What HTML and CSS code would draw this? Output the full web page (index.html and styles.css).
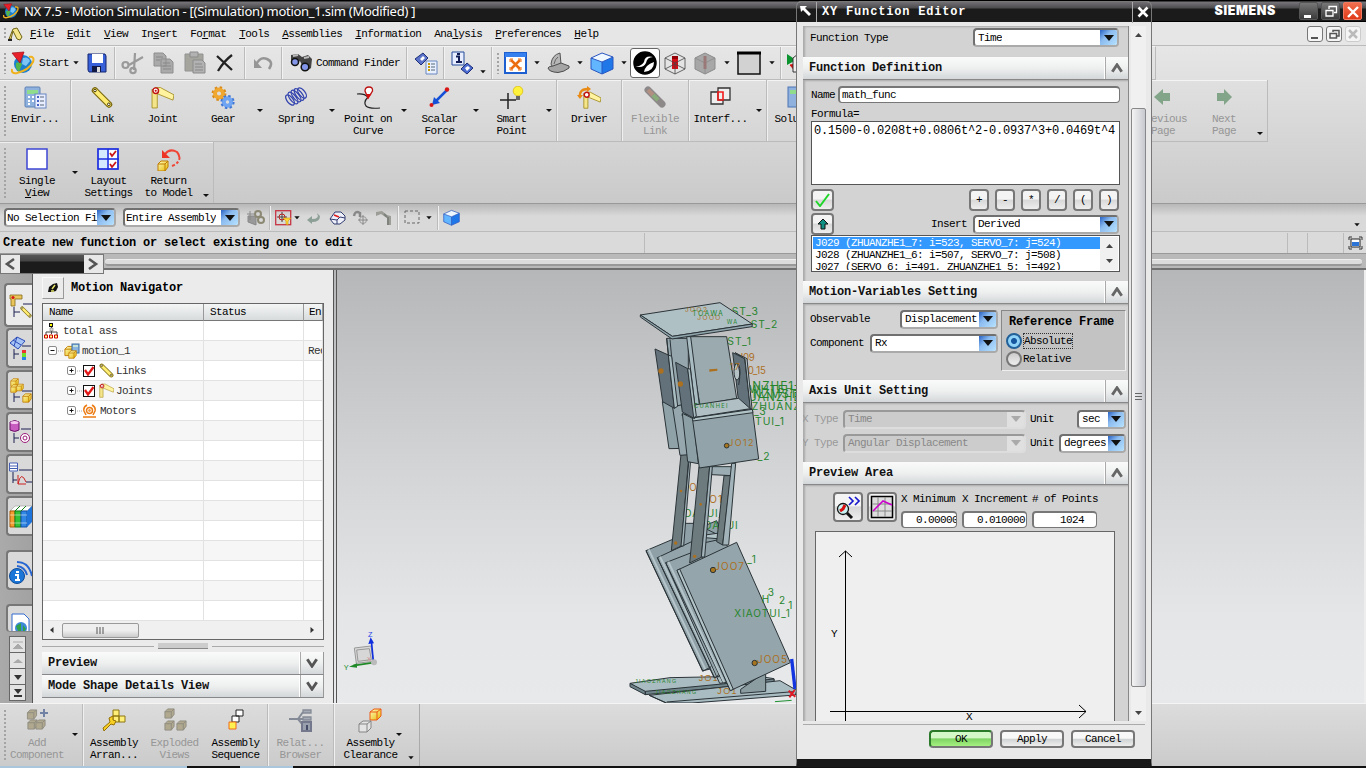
FILE: index.html
```html
<!DOCTYPE html>
<html lang="en">
<head>
<meta charset="utf-8">
<title>NX 7.5 - Motion Simulation</title>
<link rel="stylesheet" href="styles.css">
</head>
<body>
<svg class="defs" width="0" height="0">
  <defs>
    <linearGradient id="gy" x1="0" y1="0" x2="1" y2="1"><stop offset="0" stop-color="#fffbc0"/><stop offset="1" stop-color="#e6b800"/></linearGradient>
    <symbol id="i-nx" viewBox="0 0 24 24"><circle cx="12" cy="13" r="9" fill="#1b7fd0"/><path d="M5 12q4-2 6 1l-3 8q-4-3-3-9z" fill="#54b54b"/><path d="M12 7q5-2 7 3l-4 5-4-2z" fill="#7cc4f5"/><path d="M1 18q-1 5 5 4Q18 19 22 11q2-6-4-5" fill="none" stroke="#f0b21c" stroke-width="2"/><path d="M1 2l12-1-4 11z" fill="#e8202a" stroke="#a00a14" stroke-width=".7"/></symbol>
    <symbol id="i-bar" viewBox="0 0 22 22"><path d="M4 4L18 18" stroke="#77650a" stroke-width="6.400" stroke-linecap="round"/><path d="M4 4L18 18" stroke="#ffec72" stroke-width="4.200" stroke-linecap="round"/><circle cx="4" cy="4" r="1.300" fill="#fff" stroke="#443800"/><circle cx="17.800" cy="17.800" r="1.300" fill="#fff" stroke="#443800"/></symbol>
    <symbol id="i-joint" viewBox="0 0 22 22"><path d="M1 3v18h5V8z" fill="#f5e58a" stroke="#a08b1e" stroke-width=".8"/><path d="M4 1.500h5l13 7-1 5L5 7z" fill="#fff3a0" stroke="#a08b1e" stroke-width=".8"/><circle cx="4.500" cy="4.500" r="2.700" fill="#fff" stroke="#c01010" stroke-width="1.400"/><circle cx="4.500" cy="4.500" r="1" fill="#c01010"/></symbol>
    <symbol id="i-cube" viewBox="0 0 24 24"><path d="M1 7l11 4v12L1 18z" fill="#62b5ff"/><path d="M12 11l11-5v12l-11 5z" fill="#1f77e8"/><path d="M1 7l11-5 11 4-11 5z" fill="#eff8ff"/><path d="M1 7l11 4 11-5M12 11v12M1 7v11l11 5 11-5V6L12 2z" fill="none" stroke="#2956c0"/></symbol>
    <symbol id="i-ycube" viewBox="0 0 12 12"><path d="M1 4l3-3h7v6l-3 4H1z" fill="url(#gy)" stroke="#c07c00"/><path d="M1 4h7v7M8 4l3-3" fill="none" stroke="#c07c00"/></symbol>
    <symbol id="i-gcube" viewBox="0 0 12 12"><path d="M1 4l3-3h7v6l-3 4H1z" fill="#b0a88f" stroke="#8f8c80"/><path d="M1 4h7v7M8 4l3-3" fill="none" stroke="#8f8c80"/></symbol>
    <symbol id="i-dd" viewBox="0 0 6 4"><path d="M.3 .3h5.400L3 3.200z" fill="#111"/></symbol>
    <symbol id="i-up" viewBox="0 0 12 10"><path d="M1.300 8.800L6 1.800l4.700 7" fill="none" stroke="#666" stroke-width="2.900"/></symbol>
    <symbol id="i-down" viewBox="0 0 12 10"><path d="M1.300 1.200L6 8.200l4.700-7" fill="none" stroke="#555" stroke-width="2.900"/></symbol>
    <symbol id="i-chk" viewBox="0 0 12 12"><rect x=".5" y=".5" width="11" height="11" fill="#fff" stroke="#111"/><path d="M2 5l3 4.500L10.500 2" fill="none" stroke="#e01818" stroke-width="2.300"/></symbol>
    <symbol id="i-plus" viewBox="0 0 10 10"><rect x=".5" y=".5" width="8" height="8" rx="1.500" fill="#fff" stroke="#8b8b8b"/><path d="M2.500 4.500h4M4.500 2.500v4" stroke="#111"/></symbol>
    <symbol id="i-minus" viewBox="0 0 10 10"><rect x=".5" y=".5" width="8" height="8" rx="1.500" fill="#fff" stroke="#8b8b8b"/><path d="M2.500 4.500h4" stroke="#111"/></symbol>
  </defs>
</svg>

<div class="app">
  <header class="titlebar">
    <svg width="16" height="16"><use href="#i-nx"/></svg>
    <span class="app-title">NX 7.5 - Motion Simulation - [(Simulation) motion_1.sim (Modified) ]</span>
    <span class="brand">SIEMENS</span>
    <div class="winbtns">
      <span class="wb"><svg width="18" height="17"><path d="M4 13.500h7" stroke="#fff" stroke-width="3"/></svg></span>
      <span class="wb"><svg width="18" height="17" fill="none" stroke="#fff" stroke-width="1.300"><path d="M7 6V3.500h7.500v6H12"/><path d="M4 7.500h7v5.500H4z"/></svg></span>
      <span class="wb red"><svg width="18" height="17"><path d="M4 4l10 10M14 4L4 14" stroke="#fff" stroke-width="2.400"/></svg></span>
    </div>
  </header>

  <nav class="menubar grip">
    <svg width="17" height="16"><path d="M2 13L6 3l4-1 5 9-2 3-3-1-4-8-2 8z" fill="#f5e58a" stroke="#6e6212"/><path d="M1 14h4" stroke="#222" stroke-width="2"/></svg>
    <span class="m"><u>F</u>ile</span><span class="m"><u>E</u>dit</span><span class="m"><u>V</u>iew</span><span class="m">In<u>s</u>ert</span><span class="m">Fo<u>r</u>mat</span><span class="m"><u>T</u>ools</span><span class="m"><u>A</u>ssemblies</span><span class="m"><u>I</u>nformation</span><span class="m">Ana<u>l</u>ysis</span><span class="m"><u>P</u>references</span><span class="m"><u>H</u>elp</span>
    <div class="mdibtns">
      <span><svg width="15" height="15"><path d="M3 11h7" stroke="#555" stroke-width="2"/></svg></span>
      <span><svg width="15" height="15" fill="none" stroke="#555" stroke-width="1.500"><path d="M6 5V3.500h6V9h-2M3 6.500h6.500V11H3z"/></svg></span>
      <span class="off"><svg width="15" height="15"><path d="M3 3l8 8M11 3l-8 8" stroke="#bbb" stroke-width="2.500"/></svg></span>
    </div>
  </nav>

  <div class="bars">
    <div class="bar1 grip">
      <div class="cell w103"><svg class="i" width="24" height="24"><use href="#i-nx"/></svg><span class="start">Start</span><svg class="dd" width="6" height="4"><use href="#i-dd"/></svg>
        <svg class="save" width="20" height="20"><path d="M1 1h17l1 2v16H2l-1-2z" fill="#3860d8" stroke="#15266e"/><path d="M5 1h11v9H5z" fill="#fff"/><path d="M5 13h9v6H5z" fill="#101844"/><path d="M10 14h3v5h-3z" fill="#ddd"/></svg></div>
      <div class="cell w130 sp">
        <svg width="24" height="24" fill="none" stroke="#9a9a9a" stroke-width="2.200"><path d="M22 6L8 14M14 2l-1 17"/><circle cx="4.500" cy="14" r="3"/><circle cx="12" cy="19.500" r="2.700"/></svg>
        <svg width="22" height="22"><path d="M1 1h9l3 3v10H1zM8 7h9l3 3v11H8z" fill="#aaa" stroke="#8e8e8e"/><path d="M3 5h7M3 8h4M10 11h7M10 14h8M10 17h8" stroke="#888"/></svg>
        <svg width="24" height="24"><path d="M2 3h18v17H2z" fill="#a5a59d" stroke="#929292"/><path d="M7 1h8v5H7zM10 9h9l3 3v10H10z" fill="#b2b2b2" stroke="#8b8b8b"/><path d="M12 13h7M12 16h8M12 19h8" stroke="#888"/></svg>
        <svg width="20" height="20"><path d="M2 3l15 14M17 2Q9 8 3 18" fill="none" stroke="#222" stroke-width="2.300"/></svg>
      </div>
      <div class="cell w37"><svg width="22" height="18" fill="none" stroke="#969696" stroke-width="2.500"><path d="M4 11q4-9 11-6t2 10"/><path d="M2 5v9h8z" fill="#969696" stroke="none"/></svg></div>
      <div class="cell w125"><svg width="24" height="20"><path d="M2 2l7-1 4 3 6-2 4 4-1 9-4 3-5-6-2-4-5 4-4-3z" fill="#444"/><path d="M4 3l5-1M15 5l5-1" stroke="#bbb" stroke-width="2"/><circle cx="6" cy="9" r="3.500" fill="#8295e8" stroke="#111" stroke-width="1.500"/><circle cx="16" cy="14" r="3.800" fill="#8295e8" stroke="#111" stroke-width="1.500"/></svg><span class="finder">Command Finder</span></div>
      <div class="cell w37"><svg width="24" height="23"><path d="M1 7l8-6 5 5-7 7z" fill="#5a73c8" stroke="#1e2f78"/><path d="M6 7l3-3 2 2-3 3z" fill="#fff"/><path d="M12 9h11v13H12z" fill="#e8f0ff" stroke="#6887bf"/><path d="M14 12h2M14 15h2M14 18h2" stroke="#c79b00" stroke-width="2"/><path d="M17 12h4M17 15h4M17 18h4" stroke="#567"/></svg></div>
      <div class="cell w48"><svg width="24" height="24"><path d="M1 1h12v13H1z" fill="#e7edff" stroke="#234a99"/><path d="M5 5.500h3v5M5 11h6M6 3h3" stroke="#111c55" stroke-width="2" fill="none"/><path d="M10 18l6-6 6 5-6 6z" fill="#4c6bd0" stroke="#1e2f78"/><path d="M14 17l3-2 2 2-3 3z" fill="#fff"/></svg><svg class="dd low" width="6" height="4"><use href="#i-dd"/></svg></div>
      <div class="cell w289 grip2">
        <svg width="23" height="22"><path d="M1 1h21v20H1z" fill="#fff" stroke="#1d5fd0" stroke-width="2"/><path d="M1 1h21v4H1z" fill="#3681ef"/><path d="M7 8l9 9M16 8l-9 9" stroke="#ec6d10" stroke-width="2.500"/><path d="M6 7h3M6 7v3M17 7h-3M17 7v3M6 18h3M6 18v-3M17 18h-3M17 18v-3" stroke="#ec6d10"/></svg>
        <svg class="dd" width="6" height="4"><use href="#i-dd"/></svg>
        <svg width="23" height="22"><path d="M4 12Q5 3 13 1l1 11-8 4z" fill="#b6b6b6" stroke="#555"/><path d="M7 12q1-5 4-7" stroke="#666" fill="none"/><path d="M1 16q1-2 5-2l8-3 8 3v2q-5 4-11 4.500Q2 20 1 16z" fill="#a5a5a5" stroke="#4d4d4d"/></svg>
        <svg class="dd" width="6" height="4"><use href="#i-dd"/></svg>
        <svg width="24" height="24"><use href="#i-cube"/></svg>
        <svg class="dd" width="6" height="4"><use href="#i-dd"/></svg>
        <span class="pressed"><svg width="24" height="24"><circle cx="12" cy="12" r="11" fill="#000"/><path d="M2 15q6 1 9-4 1-7 9-5-6 0-7 6-3 6-11 3z" fill="#fff"/><path d="M11 21q1-7 10-10 0 9-10 10z" fill="#fff"/><circle cx="12" cy="12" r="11" fill="none" stroke="#000" stroke-width="1.500"/></svg></span>
        <svg width="23" height="23"><path d="M1 6l10-5 10 5v11l-10 5-10-5z" fill="#e4e4e4"/><path d="M8 5h6v12H8z" fill="#d20d15"/><path d="M8 4h6v3H8z" fill="#940006"/><path d="M1 6l10-5 10 5v11l-10 5-10-5zM1 6l10 5 10-5M11 11v11M1 17l10-5 10 5" fill="none" stroke="#444" stroke-width=".8"/></svg>
        <svg class="g2" width="23" height="23"><path d="M1 6l10-5 10 5v11l-10 5-10-5z" fill="#a7a7a7" stroke="#8b8b8b"/><path d="M1 6l10 5 10-5M11 11v11" fill="none" stroke="#909090"/><path d="M11 4v13" stroke="#9a7878" stroke-width="3"/></svg>
        <svg class="dd" width="6" height="4"><use href="#i-dd"/></svg>
        <svg width="25" height="25"><rect x="1" y="2" width="22" height="21" fill="#d2d2d2" stroke="#111" stroke-width="1.500"/><path d="M0 2h24" stroke="#000" stroke-width="3"/></svg>
        <svg class="dd" width="6" height="4"><use href="#i-dd"/></svg>
      </div>
      <div class="cell last1"><svg width="18" height="22"><path d="M1 2l9 6-9 5z" fill="#0a932e"/><path d="M10 12l-6 1 6 7z" fill="#d41212" stroke="#d41212"/><path d="M7 6l5-4h6v18H7z" fill="#eee" stroke="#333"/></svg></div>
    </div>

    <div class="bar2 grip">
      <div class="tool w71 s"><svg width="23" height="23"><rect x="1" y="1" width="15" height="20" rx="1" fill="#8fb1dd" stroke="#5f83b5"/><path d="M3 4h11v4H3z" fill="#8fdc8c"/><path d="M4 11h2M8 11h2M4 15h2M8 15h2M4 18h2" stroke="#fff" stroke-width="2"/><rect x="11" y="8" width="11" height="14" fill="#e8eeff" stroke="#6887bf"/><path d="M13 11h2M13 15h2M13 19h2" stroke="#4864c4" stroke-width="2"/><path d="M16 11h4M16 15h4M16 19h4" stroke="#567"/></svg><b>Envir...</b></div>
      <div class="tool w62"><svg width="22" height="22"><use href="#i-bar"/></svg><b>Link</b></div>
      <div class="tool w59"><svg width="23" height="22"><use href="#i-joint"/></svg><b>Joint</b></div>
      <div class="tool w62"><svg width="24" height="24" fill="none"><circle cx="8" cy="7.500" r="4" stroke="#f0a830" stroke-width="4"/><circle cx="8" cy="7.500" r="6.500" stroke="#d98a18" stroke-width="1.800" stroke-dasharray="2.500 2.600"/><circle cx="16.500" cy="16" r="3.700" stroke="#6fa4f2" stroke-width="4"/><circle cx="16.500" cy="16" r="6.200" stroke="#3f77d6" stroke-width="1.800" stroke-dasharray="2.500 2.370"/></svg><b>Gear</b></div><i class="w12 arr"></i>
      <div class="tool w60"><svg width="24" height="22" fill="none" stroke="#3142ae" stroke-width="1.300"><ellipse cx="6" cy="14" rx="3" ry="6" transform="rotate(-38 6 14)"/><ellipse cx="9" cy="12" rx="3" ry="7" transform="rotate(-38 9 12)"/><ellipse cx="12" cy="10" rx="3" ry="7" transform="rotate(-38 12 10)"/><ellipse cx="15" cy="8.500" rx="3" ry="7" transform="rotate(-38 15 8.500)"/><ellipse cx="18" cy="7" rx="3" ry="6" transform="rotate(-38 18 7)"/></svg><b>Spring</b></div><i class="w12 arr"></i>
      <div class="tool w60"><svg width="24" height="23" fill="none"><path d="M1 8q7-1 11 3-5 5-2 9 3 3 14 2" stroke="#222" stroke-width="1.200"/><path d="M12 12L9 5q0-4 4-4t3.500 4z" fill="#fff" stroke="#bb1010" stroke-width="1.300"/><path d="M10 8h5.500L12 13z" fill="#d41010"/></svg><b>Point on<br>Curve</b></div><i class="w12 arr"></i>
      <div class="tool w59"><svg width="22" height="22"><path d="M18 4L6 16" stroke="#1652d8" stroke-width="2.500"/><path d="M3 19l2-8 6 6z" fill="#1652d8"/><circle cx="18" cy="3.500" r="2.200" fill="#d81616"/><circle cx="2.500" cy="19" r="2" fill="#d81616"/></svg><b>Scalar<br>Force</b></div><i class="w13 arr"></i>
      <div class="tool w59"><svg width="24" height="24"><path d="M0 14h16M8 7v16" stroke="#222" stroke-width="1.500"/><circle cx="18" cy="5" r="4.800" fill="#fff23c" stroke="#d8b800" stroke-width=".7"/><path d="M16 10h4v4h-4z" fill="#666"/></svg><b>Smart<br>Point</b></div><i class="w16 arr s"></i>
      <div class="tool w65 s"><svg width="24" height="24"><g transform="translate(6 5) scale(.82)"><path d="M1 3v18h5V8z" fill="#f5e58a" stroke="#a08b1e"/><path d="M4 1.500h5l13 7-1 5L5 7z" fill="#fff3a0" stroke="#a08b1e"/><circle cx="4.500" cy="4.500" r="3" fill="#fff" stroke="#c01010" stroke-width="1.800"/></g><path d="M3 11Q2 3 11 3" fill="none" stroke="#e98a14" stroke-width="2.400"/><path d="M10 0l4 3-4 3zM0 9h6l-3 4z" fill="#e98a14"/></svg><b>Driver</b></div>
      <div class="tool w67 s off"><svg width="24" height="22"><path d="M5 4l14 14" stroke="#8d8989" stroke-width="7" stroke-linecap="round"/><path d="M5 4l5 5" stroke="#b38f82" stroke-width="4"/><path d="M10 9l5 5" stroke="#88ad78" stroke-width="4"/></svg><b>Flexible<br>Link</b></div>
      <div class="tool w63"><svg width="22" height="22" fill="none" stroke="#333" stroke-width="1.300"><path d="M1 6h12v12H1z" fill="#eee"/><path d="M8 2h12v12H8z" fill="#eee"/><path d="M8 6h5v8H8z" stroke="#f21c1c" stroke-width="1.600"/></svg><b>Interf...</b></div><i class="w15 arr s"></i>
      <div class="tool w51"><svg width="20" height="22"><rect x="5" y="1" width="14" height="20" fill="#8fb1dd" stroke="#4c75b5"/><path d="M7 4h10v4H7z" fill="#8fdc8c"/></svg><b>Solut.</b></div>
      <div class="tool prev off"><svg width="18" height="20"><path d="M0 11l9-8v4h7v8H9v4z" fill="#82a488"/></svg><b>Previous<br>Page</b></div>
      <div class="tool w56 off"><svg width="18" height="20"><path d="M17 11L9 3v4H2v8h7v4z" fill="#82a488"/></svg><b>Next<br>Page</b></div><i class="w16 arr end"></i>
    </div>

    <div class="bar3 grip">
      <div class="tool w65a"><svg width="23" height="23"><rect x="1" y="1" width="20" height="20" fill="#fff" stroke="#3c46d4" stroke-width="1.500"/></svg><b>Single<br><u>V</u>iew</b></div><i class="w11 arr"></i>
      <div class="tool w57"><svg width="23" height="23"><rect x="1" y="1" width="20" height="20" fill="#d6eaff" stroke="#1c2ce0" stroke-width="1.700"/><path d="M12 2h8v8h-8zM12 12h8v8h-8z" fill="#fff"/><path d="M11 1v21M1 11h21" stroke="#1c2ce0" stroke-width="1.500"/><path d="M13 5l2 3 4-5M13 16l2 3 4-5" fill="none" stroke="#cc1717" stroke-width="1.800"/></svg><b>Layout<br>Settings</b></div>
      <div class="tool w63"><svg width="24" height="24"><path d="M8 6q5-6 12-2 5 6 0 11-2 2-5 3" fill="none" stroke="#f04434" stroke-width="2" stroke-dasharray="22 2 2.500 2"/><path d="M5 2v8h8z" fill="#ed3324"/><svg x="0" y="12" width="12" height="12"><use href="#i-ycube"/></svg></svg><b>Return<br>to Model</b></div><i class="w11 arr end"></i>
    </div>
  </div>

  <div class="selbar">
    <span class="combo sel1"><span>No Selection Fi</span><em></em></span>
    <span class="combo sel2"><span>Entire Assembly</span><em></em></span>
    <svg class="k1" width="18" height="16"><path d="M1 6h8v9l-8-3zM3 1v9M0 4h8" fill="#999" stroke="#888"/><circle cx="11" cy="4" r="3" fill="none" stroke="#8b8873" stroke-width="2"/><circle cx="14" cy="10" r="3" fill="none" stroke="#8b8873" stroke-width="2"/></svg>
    <i class="vs"></i>
    <svg width="17" height="16"><rect x=".7" y=".7" width="15" height="14" fill="none" stroke="#c63443" stroke-width="1.300"/><path d="M2 7h10M7 2v10" stroke="#444"/><circle cx="7" cy="7" r="3" fill="none" stroke="#bb2222"/><path d="M8 8h8l-3 3v4l-2-1v-3z" fill="#ffd53b" stroke="#c99c00" stroke-width=".6"/></svg>
    <svg class="dd a" width="6" height="4"><use href="#i-dd"/></svg>
    <svg class="k2" width="14" height="12"><path d="M10 1q3 6-5 6V4L0 8l5 4V10q8 0 8-6z" fill="#8da097"/></svg>
    <svg class="k3" width="17" height="14"><path d="M1 8l5-7h6l4 4v4l-5 4H5z" fill="#eef0fa" stroke="#333c70"/><path d="M5 4l5 2" stroke="#e01d1d" stroke-width="1.700" fill="none"/><path d="M8 13V9l3-3 5 1M1 8l7 1" stroke="#333c70" fill="none"/></svg>
    <svg class="k4" width="17" height="16"><path d="M2 6q1-6 6-3v4" fill="none" stroke="#888" stroke-width="2.500"/><circle cx="11" cy="10" r="3.500" fill="none" stroke="#999"/><path d="M6 10h10M11 5v10" stroke="#888"/></svg>
    <svg class="k5" width="18" height="16"><path d="M1 2l6-1 5 4 4 1v9h-4V8L6 4 1 6z" fill="#9d9d98"/><path d="M13 7v8M9 4l3 3" stroke="#7e837e" stroke-width="2"/></svg>
    <i class="vs b"></i>
    <svg width="17" height="15"><rect x="1" y="1" width="14" height="12" fill="none" stroke="#666" stroke-dasharray="3 2"/></svg>
    <svg class="dd a2" width="6" height="4"><use href="#i-dd"/></svg>
    <i class="vs c"></i>
    <svg width="17" height="17"><use href="#i-cube"/></svg>
    <svg class="dd endd" width="6" height="4"><use href="#i-dd"/></svg>
  </div>

  <div class="cue"><span class="msg">Create new function or select existing one to edit</span><i class="q1"></i><i class="q2"></i><span class="fs"><svg width="15" height="14"><path d="M1 4V1h3M11 1h3v3M1 10v3h3M11 13h3v-3" fill="none" stroke="#333"/><rect x="3" y="3" width="9" height="8" fill="#fff" stroke="#222"/><path d="M4 6h7v4H4z" fill="#2c74d5"/></svg></span></div>
  <div class="dock"><div class="dockbox"><span><svg width="18" height="18"><path d="M13 4L6 9l7 5" fill="none" stroke="#555" stroke-width="2.600"/></svg></span><i></i><span><svg width="18" height="18"><path d="M5 4l7 5-7 5" fill="none" stroke="#555" stroke-width="2.600"/></svg></span></div><div class="rail"></div></div>

  <main class="work">
    <aside class="tabs">
      <div class="tab on"><svg width="24" height="26"><path d="M1 1h12v4H6v7H2V5H1z" fill="#e9c55b" stroke="#866a16" stroke-width=".8"/><circle cx="4" cy="3.500" r="1.600" fill="#d81818"/><path d="M14 10h9M5 13v10M5 18h6" stroke="#1b2050"/><svg x="11" y="12" width="12" height="12"><use href="#i-bar"/></svg></svg></div>
      <div class="tab"><svg width="24" height="26"><path d="M1 7l7-6 8 4-7 8z" fill="#a6c3f5" stroke="#2a48b6"/><path d="M4 4l8 5M8 1l-3 9" stroke="#2a48b6"/><path d="M13 10h9M5 13v10M5 18h5" stroke="#1b2050"/><path d="M13 14h4v3h-4z" fill="#ef3030"/><path d="M13 17h4v4h-4z" fill="#6ee02a"/><path d="M13 21h4v3h-4z" fill="#2385e8"/></svg></div>
      <div class="tab"><svg width="24" height="26"><svg x="1" y="0" width="9" height="9"><use href="#i-ycube"/></svg><svg x="1" y="6" width="9" height="9"><use href="#i-ycube"/></svg><svg x="7" y="5" width="8" height="9"><use href="#i-ycube"/></svg><path d="M13 13h10M5 15v9M5 19h6" stroke="#1b2050"/><svg x="13" y="15" width="10" height="10"><use href="#i-ycube"/></svg></svg></div>
      <div class="tab"><svg width="24" height="26"><path d="M1 2q5-3 9 0v8q-4 3-9 0z" fill="#c75bc0" stroke="#6b1268"/><ellipse cx="5.500" cy="2.500" rx="4" ry="1.500" fill="#f5c6f0"/><path d="M12 9h10M5 13v10M5 18h5" stroke="#1b2050"/><circle cx="16" cy="18" r="4.500" fill="#fff" stroke="#9b1d79"/><circle cx="16" cy="18" r="2" fill="none" stroke="#9b1d79"/></svg></div>
      <div class="tab"><svg width="24" height="26"><path d="M.5 1h8v8h-8z" fill="#fff" stroke="#445fb4"/><path d="M1 4h8M1 6.500h8" stroke="#445fb4"/><path d="M10 8h13M4 10v11M4 18h4M17 20h7" stroke="#1b2050"/><path d="M9 13v9M9 22h8M9 22q3-14 8-2" fill="none" stroke="#cb2020"/></svg></div>
      <div class="tab"><svg width="24" height="26"><path d="M1 7l5-5h17l-5 5z" fill="#fff" stroke="#888" stroke-width=".5"/><path d="M1 7h5v16H1z" fill="#f29b2e" stroke="#a75d08"/><path d="M6 7h6v16H6z" fill="#33c236" stroke="#12821a"/><path d="M12 7h6v16h-6z" fill="#3187e4" stroke="#1450a3"/><path d="M18 7l5-5v16l-5 5z" fill="#1e74da"/><path d="M6 7l5-5M12 7l5-5" stroke="#12821a"/><path d="M1 11h17M1 19h17" stroke="#fff" stroke-opacity=".5"/></svg></div>
      <div class="tab gap"><svg width="25" height="28"><path d="M8 4q12 0 15 14M8 8q8 1 10 9M8 12q5 0 6 6" fill="none" stroke="#2665d2" stroke-width="2"/><circle cx="8" cy="18" r="7.500" fill="#1b76d8" stroke="#0e4b99"/><path d="M6 17h3v5M6 22h5M7 14h3" stroke="#fff" stroke-width="2" fill="none"/></svg></div>
      <div class="tab gap cut"><svg width="24" height="24"><path d="M3 5h12l5 5v14H3z" fill="#fff" stroke="#336ad0"/><circle cx="12" cy="19" r="6" fill="#3c89da"/><path d="M7 17l5-3v8H9zM14 16l3 4-3 4z" fill="#2fa248"/></svg></div>
      <div class="steps">
        <span><svg width="10" height="8"><path d="M0 1h10M0 8l5-5 5 5z" fill="#aaa" stroke="#aaa"/></svg></span><span><svg width="10" height="8"><path d="M0 6l5-4 5 4z" fill="#aaa"/></svg></span><span><svg width="10" height="8"><path d="M1 2h8L5 7z" fill="#333"/></svg></span><span><svg width="10" height="9"><path d="M1 0h8L5 5zM1 6h8v2H1z" fill="#333"/></svg></span>
      </div>
    </aside>

    <section class="nav">
      <div class="navhead"><span class="pin"><svg width="12" height="12"><path d="M1 10l1-5 4-3 4-1 1 4-2 4-4 1z" fill="#111"/><path d="M5 7l3-4M4 9l3 0" stroke="#e6e36a" stroke-width="1.500"/></svg></span><h2>Motion Navigator</h2></div>
      <div class="tree">
        <div class="r h"><span>Name</span><span>Status</span><span>En</span></div>
        <div class="r"><span><svg width="15" height="16"><path d="M7.500 4v7M2 12V9h11v3" fill="none" stroke="#444"/><rect x="5.500" y=".5" width="3" height="3" fill="#ff0" stroke="#111"/><path d="M6 5h3v3H6z" fill="#ddd" stroke="#666" stroke-width=".5"/><path d="M.5 12h3v3h-3zM5.500 12h3v3h-3zM10.500 12h3v3h-3z" fill="#ff8" stroke="#c00"/></svg><q class="n1">total ass</q></span><span></span><span></span></div>
        <div class="r"><span class="l1"><svg width="10" height="10"><use href="#i-minus"/></svg><svg class="hd" width="5" height="16"><path d="M0 8h5" stroke="#aaa" stroke-dasharray="1 1"/></svg><svg width="16" height="16"><svg x="0" y="1" width="11" height="14"><use href="#i-ycube"/></svg><rect x="8" y="1" width="7" height="9" fill="#8bb5df" stroke="#3a6fa4"/><path d="M9 3h5" stroke="#d9f2d8" stroke-width="1.500"/><svg x="4" y="7" width="9" height="9"><use href="#i-ycube"/></svg></svg><q>motion_1</q></span><span></span><span class="rec">Rec</span></div>
        <div class="r"><span class="l2"><svg width="10" height="10"><use href="#i-plus"/></svg><svg class="hd" width="5" height="16"><path d="M0 8h5" stroke="#aaa" stroke-dasharray="1 1"/></svg><svg width="12" height="12"><use href="#i-chk"/></svg><svg class="ti" width="15" height="15"><use href="#i-bar"/></svg><q>Links</q></span><span></span><span></span></div>
        <div class="r"><span class="l2"><svg width="10" height="10"><use href="#i-plus"/></svg><svg class="hd" width="5" height="16"><path d="M0 8h5" stroke="#aaa" stroke-dasharray="1 1"/></svg><svg width="12" height="12"><use href="#i-chk"/></svg><svg class="ti" width="15" height="15"><use href="#i-joint"/></svg><q>Joints</q></span><span></span><span></span></div>
        <div class="r"><span class="l2"><svg width="10" height="10"><use href="#i-plus"/></svg><svg class="hd" width="5" height="16"><path d="M0 8h5" stroke="#aaa" stroke-dasharray="1 1"/></svg><svg width="13" height="14" fill="none" stroke="#ec7c13" stroke-width="1.500"><path d="M4 1Q0 3 1 7l2 4M9 1q4 2 3 6l-2 4M0 13h13"/><circle cx="6.500" cy="6.500" r="3"/><circle cx="6.500" cy="6.500" r=".5"/></svg><q class="n2">Motors</q></span><span></span><span></span></div>
        <div class="r"><span></span><span></span><span></span></div><div class="r"><span></span><span></span><span></span></div><div class="r"><span></span><span></span><span></span></div><div class="r"><span></span><span></span><span></span></div><div class="r"><span></span><span></span><span></span></div><div class="r"><span></span><span></span><span></span></div><div class="r"><span></span><span></span><span></span></div><div class="r"><span></span><span></span><span></span></div><div class="r"><span></span><span></span><span></span></div><div class="r"><span></span><span></span><span></span></div>
        <div class="hs"><svg width="5" height="8"><path d="M4.500 1v6L1 4z" fill="#333"/></svg><i><svg width="9" height="7"><path d="M1 0v7M4 0v7M7 0v7" stroke="#555"/></svg></i><svg class="ra" width="5" height="8"><path d="M.5 1v6L4 4z" fill="#333"/></svg></div>
      </div>
      <div class="split"><i></i><b></b><i></i></div>
      <div class="sec"><h3>Preview</h3><span><svg width="12" height="10"><use href="#i-down"/></svg></span></div>
      <div class="sec"><h3>Mode Shape Details View</h3><span><svg width="12" height="10"><use href="#i-down"/></svg></span></div>
    </section>

    <section class="view">
      <svg class="scene" viewBox="337 270 1027 433" width="1027" height="433">
        <g transform="translate(0 490) scale(.33333)" font-family="Liberation Sans" font-size="18">
          <path d="M1063 474l50-6 8 46-52 6zM1070 480l38-4 6 33-40 5z" fill="#d7d7d7" stroke="#999" stroke-width="3"/>
          <path d="M1120 515l-6-64" stroke="#1030e0" stroke-width="5"/><path d="M1105 462l7-20 10 18z" fill="#1030e0"/>
          <path d="M1120 518l-60 9" stroke="#208a28" stroke-width="5"/><path d="M1047 530l24-10v13z" fill="#208a28"/><circle cx="1122" cy="517" r="9" fill="#bbb"/>
          <text x="1104" y="440" fill="#2b43e8" font-size="22">Z</text><text x="1031" y="540" fill="#208a28" font-size="22">Y</text><text x="1101" y="514" fill="#d09090">X</text>
        </g>
        <g transform="translate(620 490) scale(.33333)" stroke="#2a3337" stroke-width="3" stroke-linejoin="round">
          <path d="M30 580l120-17 260-5 52 8v10L78 608z" fill="#a9bcc2"/><path d="M30 580l46 24v10l-46-24zM76 604l386-37v10L76 614z" fill="#70858b"/>
          <path d="M88 616L480 572l50 29-4 14-310 24H140z" fill="#a9bcc2"/><path d="M88 616l50 23M140 636l380-31" fill="none"/>
          <g stroke="none" font-family="Liberation Sans" font-size="27" letter-spacing="4"><text x="45" y="580" fill="#26852c" font-size="16">JIAOZHANG</text><text x="105" y="612" fill="#26852c" font-size="16">JIAOZHANG</text><text x="236" y="572" fill="#ac701e">JO1</text><text x="292" y="611" fill="#ac701e">JO1</text></g>
          <path d="M362 598l75-52v58l-75 6z" fill="#8c9da2"/>
          <path d="M78 182L290 92l50 120 100 290-192 40z" fill="#8fa1a7"/>
          <path d="M185 100h40l90 45-70 15-60 20z" fill="#8fa1a7"/><path d="M235 138l70-10 12 20-62-5z" fill="#b4c5ca"/>
          <g stroke="none" font-family="Inter, sans-serif" font-size="30" letter-spacing="3"><text x="193" y="80" fill="#26852c">DATUI_2</text><text x="253" y="116" fill="#26852c">DATUI</text><text x="268" y="40" fill="#ac701e">O1</text></g>
          <path d="M112 203L215 155l180 340-112 67z" fill="#93a5ab"/>
          <path d="M137 218L235 180l180 350-105 50z" fill="#93a5ab"/>
          <path d="M86 178l170 360M120 200l171 362M145 215l168 364" fill="none" stroke="#b5c5ca" stroke-width="6"/><path d="M78 182l170 362 26-14M112 203l171 361 17-8M137 218l162 362 24-3" fill="none"/>
          <path d="M171 241L350 157l161 361-180 84z" fill="#94a5ab"/><path d="M171 241l8-4 161 361-9 4z" fill="#b1c3c7"/>
          <circle cx="279" cy="240" r="8" fill="#a8751f"/><circle cx="404" cy="519" r="8" fill="#a8751f"/>
          <path d="M515 507l10 90" stroke="#1235e0" stroke-width="10"/><path d="M506 602l20 18M524 600l-16 22" stroke="#e01a25" stroke-width="6"/><path d="M465 635l50-4" stroke="#209030"/>
          <g stroke="none" font-family="Inter, sans-serif" font-size="30" letter-spacing="3" fill="#26852c"><text x="382" y="218">_1</text><text x="443" y="318">3</text><text x="477" y="343">2</text><text x="505" y="356">1</text><text x="425" y="338">H</text><text x="343" y="380">XIAOTUI_1</text><g fill="#ac701e"><text x="283" y="241">JOO7</text><text x="411" y="520">JOO5</text></g></g>
        </g>
        <g transform="translate(620 290) scale(.33333)" stroke="#2a3337" stroke-width="3" stroke-linejoin="round">
          <g stroke="none" font-family="Inter, sans-serif" font-size="31" letter-spacing="3" fill="#26852c"><text x="335" y="76">ST_3</text><text x="392" y="115">ST_2</text><text x="322" y="166">ST_1</text><text x="370" y="300" font-size="35">ANZHE1_7</text><text x="388" y="310" font-size="32">WHTEHTL</text><text x="385" y="334" font-size="34">UANZHE1</text><text x="398" y="325" font-size="34">NZMSTF</text><text x="395" y="360">ZHUANZHE</text><text x="402" y="375">_3</text><text x="405" y="404">TUI_1</text><text x="413" y="510">_2</text></g>
          <g fill="#ac701e" stroke="none" font-family="Inter, sans-serif" font-size="29"><text x="353" y="212">J09</text><text x="383" y="253">0_15</text><text x="208" y="602">O</text></g>
          <path d="M183 493h24L184 768l-30 14z" fill="#6d7b7e"/><path d="M207 510h5L191 768h-8z" fill="#a2b4ba"/><path d="M275 530h60v27l-60-3z" fill="#9badb3"/>
          <path d="M312 557h20L308 765l-18-10z" fill="#6d7b7e"/><path d="M335 520h12L326 765h-18z" fill="#a2b4ba"/>
          <path d="M237 530h32L244 802l-35 17z" fill="#6d7b7e"/><path d="M269 530h8L254 801h-10z" fill="#a2b4ba"/>
          <path d="M127 335l65 15 5 125-50 1z" fill="#8fa2a8"/><path d="M158 353l40-15 25 155-43 3z" fill="#96a8ae"/>
          <path d="M140 145h65v195l-45 10z" fill="#95a7ad"/><path d="M150 148l12 130M140 145l14 130" fill="none"/>
          <path d="M205 140h115l30 185-110 20z" fill="#9aaaaf"/><path d="M200 140h12l26 205-14-5z" fill="#a9bcc2"/>
          <path d="M105 177l40 18 18 160-35-20z" fill="#62717a"/><path d="M145 195l10 4 18 150-10 6z" fill="#a9bcc2"/>
          <path d="M338 188l36 18 17 150-35-20z" fill="#62717a"/><path d="M345 188l36 18 15 150-5 1-16-150z" fill="#b8c6ca"/>
          <ellipse cx="351" cy="245" rx="9" ry="25" fill="#b4c2c6"/><path d="M350 220q15 20 6 65" fill="none"/>
          <path d="M185 375l190-17 18 5-170 24z" fill="#9bacae"/><path d="M223 345l133-20 35 31-173 27z" fill="#afbfc3"/>
          <path d="M187 370l33 16 15 135-32-6z" fill="#8c9fa5"/>
          <path d="M217 384l180-26 19 149-178 27z" fill="#92a4a9"/><path d="M217 384l180-26 2 10-180 25z" fill="#b1c3c7"/>
          <path d="M167 217l36 19 21 150-37-20z" fill="#62717a"/><path d="M203 236l8 1 18 142-8 4z" fill="#a9bcc2"/>
          <path d="M61 75l239-37 97 64-240 37z" fill="#afc0c5"/><path d="M61 75l96 64 240-37-1 8-240 37-95-66z" fill="#8fa4ab"/>
          <g stroke="none" fill="#ac701e"><path d="M268 238l24-2v6l-24 3z"/><circle cx="123" cy="243" r="8"/><circle cx="181" cy="282" r="8"/><circle cx="183" cy="603" r="4"/><circle cx="167" cy="759" r="5"/><circle cx="224" cy="799" r="5"/><circle cx="242" cy="643" r="4"/></g><circle cx="320" cy="467" r="7" fill="#a8751f"/>
          <g stroke="none" font-family="Inter, sans-serif" font-size="27" letter-spacing="4"><text x="325" y="467" fill="#ac701e">JO12</text><text x="195" y="66" fill="#ac701e" font-size="20">JOO2</text><text x="232" y="90" fill="#ac701e" font-size="20">JOOO</text><text x="217" y="78" fill="#26852c" font-size="21">TOAWA</text><text x="320" y="103" fill="#26852c" font-size="17">WA</text><text x="222" y="354" fill="#26852c" font-size="17">CUANHEI</text><text x="329" y="239" fill="#ac701e">17</text></g>
        </g>
      </svg>
    </section>
  </main>

  <footer class="bottom grip">
    <div class="tool w68 off"><svg width="23" height="23"><svg x="0" y="1" width="12" height="11"><use href="#i-gcube"/></svg><svg x="1" y="11" width="11" height="11"><use href="#i-gcube"/></svg><svg x="9" y="11" width="11" height="11"><use href="#i-gcube"/></svg><path d="M18 1v8M14 5h8" stroke="#7282a4" stroke-width="2"/></svg><b>Add<br>Component</b></div><i class="w15 arr s addarr"></i>
    <div class="tool w62"><svg width="24" height="24"><path d="M11 2h6v6h-6zM17 8h6v6h-6zM11 8h6v6h-6z" fill="#ffef78" stroke="#8c7710"/><path d="M1 20L8 14 7 10l4-2v4l3 1-2 4-3-1-7 7z" fill="#f7d023" stroke="#957004"/></svg><b>Assembly<br>Arran...</b></div>
    <div class="tool w59 off"><svg width="24" height="23"><svg x="1" y="0" width="11" height="11"><use href="#i-gcube"/></svg><svg x="1" y="12" width="11" height="11"><use href="#i-gcube"/></svg><svg x="13" y="12" width="11" height="11"><use href="#i-gcube"/></svg></svg><b>Exploded<br>Views</b></div>
    <div class="tool w64 s"><svg width="22" height="23"><path d="M11 2h7v6h-7zM7 8h7v6H7z" fill="#fff" stroke="#222"/><path d="M4 14h7v7H4z" fill="#fff250" stroke="#f06a18"/></svg><b>Assembly<br>Sequence</b></div>
    <div class="tool w66 s off"><svg width="24" height="24" fill="none" stroke="#858b96" stroke-width="2"><path d="M0 11h9l5-7M9 11h5M9 11l5 6"/><path d="M14 2h8v3h-8zM14 9h8v3h-8z" fill="#a5abb4" stroke-width="1.300"/><path d="M13 14h9v9h-9z" fill="#9a9fae" stroke="#73788c"/><path d="M18 17v5" stroke="#444c68"/></svg><b>Relat...<br>Browser</b></div>
    <div class="tool w73"><svg width="25" height="25"><svg x="11" y="0" width="13" height="13"><path d="M1 4l4-3h7v7l-4 4H1z" fill="url(#gy)" stroke="#eb5a14"/><path d="M1 4h7v8M8 4l4-3" fill="none" stroke="#eb5a14"/></svg><path d="M1 16l4-3h8v7l-4 4H1zM1 16h8v8M9 16l4-3" fill="#e4e4e4" stroke="#858585"/></svg><b>Assembly<br>Clearance</b></div><i class="w12 arr cl"></i>
    <svg class="dd bdd" width="6" height="4"><use href="#i-dd"/></svg><i class="bend"></i>
  </footer>
  <div class="taskline"></div>
</div>

<section class="dialog">
  <div class="dtitle"><span class="dp"><svg width="14" height="14"><path d="M1 2l7 0-2 2 6 6-2 2-6-6-2 2z" fill="#fff"/></svg></span><h1>XY Function Editor</h1><span class="dx"><svg width="12" height="12"><path d="M1.500 1.500l9 9M10.500 1.500l-9 9" stroke="#fff" stroke-width="2.600"/></svg></span></div>
  <div class="dbody">
    <div class="scroll">
      <div class="fbody f0"><span>Function Type</span><span class="combo w146"><span>Time</span><em></em></span></div>
      <div class="sec"><h3>Function Definition</h3><span><svg width="12" height="10"><use href="#i-up"/></svg></span></div>
      <div class="fbody f1">
        <div class="row name"><span>Name</span><span class="inp">math_func</span></div>
        <div class="flabel">Formula=</div>
        <div class="formula">0.1500-0.0208t+0.0806t^2-0.0937^3+0.0469t^4</div>
        <div class="row ops"><span class="btn b23"><svg width="16" height="14"><path d="M1 8l4 5L14 1" fill="none" stroke="#20d52a" stroke-width="2"/></svg></span><i class="grow"></i><span class="btn">+</span><span class="btn">-</span><span class="btn">*</span><span class="btn">/</span><span class="btn">(</span><span class="btn">)</span></div>
        <div class="row ins"><span class="btn b23"><svg width="12" height="12"><path d="M6 1l5 5H8v5H4V6H1z" fill="#0f8f84" stroke="#111"/></svg></span><i class="grow"></i><span class="il">Insert</span><span class="combo w146"><span>Derived</span><em></em></span></div>
        <div class="list"><div class="items"><p class="hl">J029 (ZHUANZHE1_7: i=523, SERVO_7: j=524)</p><p>J028 (ZHUANZHE1_6: i=507, SERVO_7: j=508)</p><p>J027 (SERVO_6: i=491, ZHUANZHE1_5: j=492)</p></div><div class="lsb"><svg width="7" height="4"><path d="M0 4l3.500-4L7 4z" fill="#444"/></svg><svg width="7" height="4"><path d="M0 0h7L3.500 4z" fill="#444"/></svg></div></div>
      </div>
      <div class="sec"><h3>Motion-Variables Setting</h3><span><svg width="12" height="10"><use href="#i-up"/></svg></span></div>
      <div class="fbody f2">
        <div class="lcol"><div class="row"><span>Observable</span><span class="combo w98"><span>Displacement</span><em></em></span></div><div class="row"><span>Component</span><span class="combo w128"><span>Rx</span><em></em></span></div></div>
        <div class="group"><h4>Reference Frame</h4><div class="rad on"><i></i><span>Absolute</span></div><div class="rad"><i></i><span>Relative</span></div></div>
      </div>
      <div class="sec"><h3>Axis Unit Setting</h3><span><svg width="12" height="10"><use href="#i-up"/></svg></span></div>
      <div class="fbody f3">
        <div class="row"><span class="ty">X Type</span><span class="combo w184 dis"><span>Time</span><em></em></span><span class="un">Unit</span><span class="combo w50"><span>sec</span><em></em></span></div>
        <div class="row"><span class="ty">Y Type</span><span class="combo w184 dis"><span>Angular Displacement</span><em></em></span><span class="un">Unit</span><span class="combo w68c"><span>degrees</span><em></em></span></div>
      </div>
      <div class="sec"><h3>Preview Area</h3><span><svg width="12" height="10"><use href="#i-up"/></svg></span></div>
      <div class="fbody f4">
        <div class="row pv">
          <span class="btn b30"><svg width="26" height="26"><path d="M14 3l4 4-4 4M20 3l4 4-4 4" fill="none" stroke="#1717cc" stroke-width="1.700"/><circle cx="8" cy="15" r="5.500" fill="#c9f2f2" stroke="#111" stroke-width="1.300"/><path d="M12 19l5 5" stroke="#111" stroke-width="3"/><path d="M5 17l3-2 2-4" stroke="#d80d0d" stroke-width="3"/></svg></span>
          <span class="btn b30"><svg width="26" height="26"><rect x="2.500" y="2.500" width="21" height="21" fill="#ddd" stroke="#000" stroke-width="1.500"/><path d="M9 3v20M16 3v20M3 10h20M3 17h20" stroke="#888"/><path d="M4 17L14 7l9 4" fill="none" stroke="#cc00cc" stroke-width="1.500"/></svg></span>
          <div class="p p1"><span>X Minimum</span><span class="inp">0.00000</span></div><div class="p p2"><span>X Increment</span><span class="inp">0.010000</span></div><div class="p p3"><span># of Points</span><span class="inp">1024</span></div>
        </div>
        <svg class="plot" width="300" height="190"><rect x=".5" y=".5" width="299" height="200" fill="#efefef" stroke="#666"/><path d="M30.500 20v170M15 180.500h256M24 26l6.500-6 6.500 6M264 174l7 6.500-7 6.500" fill="none" stroke="#000"/><text x="16" y="106">Y</text><text x="151" y="189">X</text></svg>
      </div>
    </div>
    <div class="vsb"><svg width="7" height="4"><path d="M0 4l3.500-4L7 4z" fill="#444"/></svg><i><b></b></i><svg class="dn" width="7" height="4"><path d="M0 0h7L3.500 4z" fill="#444"/></svg></div>
  </div>
  <div class="dfoot"><span class="db ok">OK</span><span class="db">Apply</span><span class="db">Cancel</span></div>
</section>
</body>
</html>
```
FILE: styles.css
```css
*{box-sizing:border-box}
body{margin:0;width:1366px;height:768px;overflow:hidden;font:11px/12px "Liberation Mono",monospace;letter-spacing:-.6px;color:#000;position:relative}
i,em{font-style:normal}
h1,h2,h3,h4,p{margin:0}
h1,h2,h3,h4,.msg{font:bold 12px/14px "Liberation Mono",monospace;letter-spacing:-.2px;white-space:nowrap}
svg{display:block;flex:none}
q{quotes:none}
.defs{position:absolute}
u{text-underline-offset:1px}
.app{display:flex;flex-direction:column;width:1366px;height:768px;background:#d8d8d8}

.titlebar{height:22px;flex:none;display:flex;align-items:center;padding:0 4px 0 3px;background:linear-gradient(#000 0 1px,#777579 2px,#4c4b4e 8px,#1b1b1b 9px,#1b1b1b 21px,#000 21px);color:#fff}
.app-title{font:13px/20px "Noto Sans",sans-serif;letter-spacing:-.27px;margin-left:5px;white-space:nowrap}
.brand{margin-left:auto;font:900 12.5px/18px Inter,sans-serif;letter-spacing:.6px}
.winbtns{display:flex;gap:3px;margin-left:23px;padding-bottom:1px}
.wb{width:19px;height:18px;border-radius:2px;background:linear-gradient(#777,#3a3a3a);border:1px solid #555}
.wb.red{background:linear-gradient(#f07050,#e03a18);border-color:#f07a62}

.menubar{height:24px;flex:none;display:flex;align-items:center;padding-left:7px;background:#e6e6e6;border-bottom:1px solid #bbb;position:relative}
.grip{position:relative}
.grip::before,.grip2::before{content:"";position:absolute;left:4px;top:6px;bottom:5px;width:2px;background:repeating-linear-gradient(#a4a4a4 0 2px,transparent 2px 4px)}
.menubar>svg{margin-right:6px}
.m{margin-right:13px}
.mdibtns{margin-left:auto;display:flex;gap:3px;padding-right:5px}
.mdibtns span{width:16px;height:16px;border:1px solid #777;border-radius:3px;background:#f5f5f5}
.mdibtns .off{border-color:#ccc}

.bars{flex:none;height:158px;background:linear-gradient(#e6e6e6,#cacaca);border-bottom:1px solid #999}
.bar1{display:flex;width:1156px;height:34px;border:1px solid #bbb;border-width:0 1px 1px 0;padding-left:11px;border-top:1px solid #f4f4f4}
.cell{display:flex;align-items:center;border-right:1px solid #bbb;box-shadow:1px 0 #f2f2f2;position:relative;flex:none}
.w103{width:104px}.w130{width:130px;padding-left:6px}.w37{width:37px;padding-left:7px}.w125{width:125px;padding-left:7px}.w48{width:48px;padding-left:7px}
.w289{width:289px;padding-left:12px}
.cell.last1{border:0;box-shadow:none;padding-left:5px}
.start{margin:0 4px}
.finder{margin-left:3px;white-space:nowrap}
.save{margin-left:8px}
.sp{gap:8px}
.low{margin:18px 0 0 5px}
.w289>.dd{margin:0 7px}
.pressed{width:30px;height:30px;border:1px solid #666;border-radius:3px;background:#fff;padding:2px;margin:0 4px 0 -4px}
.g2{margin-left:7px}
.grip2::before{left:5px}

.bar2{display:flex;width:1268px;height:62px;border:1px solid #bbb;border-width:0 1px 1px 0;box-shadow:inset 0 1px #f4f4f4}
.bar3{display:flex;width:214px;height:61px;border-right:1px solid #bbb;box-shadow:inset 0 1px #eee;padding-left:5px}
.tool{display:flex;flex-direction:column;align-items:center;padding-top:6px;flex:none}
.tool>svg{height:23px;margin-bottom:4px}
.tool b{font-weight:normal;text-align:center;white-space:nowrap}
.tool.off{color:#969696}
.s{border-right:1px solid #bbb;box-shadow:1px 0 #f0f0f0}
.arr{display:flex;justify-content:center;padding-top:29px;flex:none}
.arr::before{content:"";border:3px solid transparent;border-top:3px solid #111;border-bottom:0;height:0}
.arr.end{padding-top:52px}
.w71{width:71px}.w62{width:62px}.w59{width:59px}.w60{width:60px}.w12{width:12px}.w13{width:13px}.w16{width:16px}.w65{width:65px}.w65a{width:64px}.w67{width:67px}.w63{width:63px}.w15{width:15px}.w51{width:51px}.w56{width:56px}.w68{width:68px}.w57{width:57px}.w11{width:11px}.w64{width:64px}.w66{width:66px}.w73{width:73px}
.prev{margin-left:312px;width:66px}

.selbar{flex:none;height:28px;display:flex;align-items:center;padding-left:4px;background:linear-gradient(#b8b8b8,#d9d9d9 12px);border-bottom:1px solid #bbb}
.combo{display:flex;height:19px;background:#fff;border:2px solid #707070;border-right-color:#aaa;border-bottom-color:#aaa;border-radius:4px;overflow:hidden;align-items:center;justify-content:space-between;white-space:nowrap}
.combo>span{padding-left:3px;overflow:hidden}
.combo em{flex:none;width:17px;height:17px;background:linear-gradient(135deg,#205ac0,#8cbcf0 40%,#b8e4ff);display:flex;align-items:center;justify-content:center}
.combo em::before{content:"";border:5px solid transparent;border-top:6px solid #111;border-bottom:0}
.sel1{width:112px;margin-right:7px}.sel2{width:117px}
.sel1>span,.sel2>span{padding-left:1px}
.k1{margin-left:7px}
.vs{width:2px;height:24px;border-left:1px solid #bbb;background:#f1f1f1;margin:0 4px}
.vs.b{margin:0 5px 0 4px}.vs.c{margin:0 4px 0 5px}
.a{margin:0 7px 0 2px}.k2{margin-right:8px}.k3{margin-right:6px}.k4{margin-right:6px}.a2{margin:0 0 0 5px}
.endd{margin-left:auto;margin-right:6px;margin-top:14px}
.cue{flex:none;height:22px;display:flex;align-items:center;background:#dadada;border-bottom:1px solid #999;padding-left:3px}
.msg{width:641px}
.q1,.q2{height:20px;border:1px solid #bbb;border-width:0 1px}
.q1{width:644px}.q2{width:37px;margin-left:19px}
.fs{margin-left:auto;padding-right:3px}
.dock{flex:none;height:14px;background:#b9b9b9;position:relative;padding:5px 4px 0 105px}
.rail{height:7px;border-radius:3px;background:#dcdcdc;border-bottom:2px solid #999;border-top:1px solid #eee}
.dockbox{position:absolute;left:0;top:0;width:104px;height:20px;display:flex;border:1px solid #777;background:#222;z-index:2}
.dockbox span{width:19px;background:#e8e8e8}
.dockbox i{flex:1;background:linear-gradient(#555,#444 6px,#1b1b1b 7px)}

.work{flex:1;display:flex;min-height:0;border-top:2px solid #707070}
.tabs{width:33px;background:linear-gradient(90deg,#aaa,#a2a2a2);border-right:1px solid #555;padding:13px 0 0 6px;position:relative;overflow:hidden}
.tab{height:40px;margin-bottom:2px;border:2px solid #777;border-right:0;border-radius:4px 0 0 4px;background:#d9d9d9;padding:6px 0 0 1px;overflow:hidden}
.tab.on{height:44px;margin:0 -1px 1px -2px;background:#ebebeb;padding:9px 0 0 3px}
.tab.gap{margin-top:14px}
.tab.cut{height:28px;margin-top:14px;border-bottom:1px solid #888;padding-top:3px}
.steps{position:absolute;left:9px;bottom:2px;width:17px;background:#666;display:flex;flex-direction:column;gap:1px;padding:1px}
.steps span{height:15px;background:#e3e3e3;padding:4px 3px}
.nav{width:300px;background:#ebebeb;padding:6px 9px 0 9px}
.navhead{display:flex;align-items:center;height:23px}
.pin{width:22px;height:22px;padding:4px;border:1px solid #f8f8f8;border-right-color:#999;border-bottom-color:#999}
.navhead h2{margin-left:7px}
.tree{width:282px;height:337px;margin-top:4px;border:1px solid #666;background:#fff;overflow:hidden}
.r{display:grid;grid-template-columns:161px 100px 19px;height:20px;color:#333}
.r>span{border-right:1px solid #e2e2e2;border-bottom:1px solid #e2e2e2;display:flex;align-items:center;overflow:hidden;white-space:nowrap;padding-left:1px}
.r:nth-child(odd)>span{background:#f6f6f6}
.r.h{height:17px;color:#000}
.r.h>span{background:linear-gradient(#f4f6f6,#d8dbdc);border-right:1px solid #999;border-bottom:1px solid #777;padding-left:6px}
.r.h>span:last-child{padding-left:5px}
.r>.l1{padding-left:5px}.r>.l2{padding-left:24px}
.hd{margin:0 1px 0 0}
.ti{margin:0 0 0 4px}
.r q{margin-left:2px}.r .n1{margin-left:4px}.r .n2{margin-left:4px}
.r>.rec{padding-left:4px}
.hs{height:18px;display:flex;align-items:center;background:#f0f0f0;padding:0 8px 0 6px}
.hs i{width:77px;height:15px;margin-left:8px;border:1px solid #999;border-radius:2px;background:linear-gradient(#eee 50%,#ccc);display:flex;align-items:center;justify-content:center}
.ra{margin-left:auto}
.split{height:12px;display:flex;align-items:center;gap:4px}
.split i{flex:1;border-top:1px solid #aaa}
.split b{width:50px;height:6px;background:#ccc;border-bottom:1px solid #888}
.sec{display:flex;height:23px;border-bottom:1px solid #888;background:linear-gradient(#fafafa,#eef0f0 50%,#d4d7d9)}
.sec h3{flex:1;padding:4px 0 0 6px;color:#111}
.sec>span{width:23px;border-left:1px solid #aaa;box-shadow:-1px 0 #fff;padding:6px 0 0 5px}
.nav .sec{border-right:1px solid #999;width:282px}
.view{flex:1;border-left:4px double #555;border-right:2px solid #eee;background:linear-gradient(#b6b7b9,#d3d4d6 45%,#e5e6e8 80%,#e8e9eb)}

.bottom{flex:none;height:63px;width:1366px;padding-left:4px;display:flex;border-top:1px solid #f5f5f5;background:linear-gradient(#dcdcdc,#cbcbcb)}
.bottom .tool{padding-top:4px}.bottom .tool>svg{height:25px;margin-bottom:4px}
.bottom .w68{width:66px}
.bottom .w15{width:13px}
.bottom .addarr{padding-right:3px}
.bottom .w12.cl{margin-left:-14px}
.bdd{margin:52px 0 0 3px}
.bend{margin-left:5px;border-left:1px solid #aaa}
.taskline{height:2px;background:linear-gradient(90deg,#a9c6dc 187px,#111 187px 240px,#a9c6dc 240px 293px,#111 293px)}

.dialog{position:absolute;left:796px;top:1px;width:356px;height:766px;background:#e9e9e9;border:1px solid #777;border-bottom:8px solid #181818;border-radius:5px 5px 2px 2px;overflow:hidden}
.dtitle{height:21px;margin:-1px -1px 0;display:flex;align-items:center;background:linear-gradient(#777579,#4c4b4e 7px,#1b1b1b 8px);color:#fff}
.dp{width:21px;height:21px;padding:3px;border-right:1px solid #aaa}
.dtitle h1{flex:1;padding-left:5px;letter-spacing:.82px}
.dx{width:20px;padding:5px 4px;border-left:1px solid #aaa}
.dbody{display:flex;height:695px;margin-top:4px;padding:0 5px 0 6px}
.scroll{width:326px;height:695px;overflow:hidden;background:#d3d3d3;border-right:1px solid #888}
.fbody{box-shadow:inset 2px 1px 2px #aaa;overflow:hidden}
.f0{height:31px;display:flex;justify-content:space-between;padding:2px 9px 0 7px;line-height:20px}
.w146{width:146px}
.f1{height:201px;padding:6px 8px 0 8px}
.row{display:flex;align-items:center}
.inp{height:17px;border:2px solid #777;border-right:1px solid #777;border-bottom:1px solid #777;border-radius:4px;background:#fff;padding:1px 2px;overflow:hidden;line-height:14px}
.name{gap:3px}.name .inp{flex:1;line-height:13px}
.flabel{margin-top:5px}
.formula{height:64px;margin-top:1px;border:1px solid #555;background:#fff;font-size:12px;letter-spacing:-.2px;padding:3px 2px;white-space:nowrap}
.ops{margin-top:3px;gap:6px;height:23px}
.grow{flex:1}
.btn{flex:none;width:20px;height:22px;border:2px solid #777;border-radius:4px;background:linear-gradient(#f4f4f4 45%,#d8d8d8 50%,#eee);display:flex;align-items:center;justify-content:center}
.ops .btn:last-child{margin-right:1px}
.b23{width:23px}
.ins{margin-top:2px;height:22px}
.il{margin-right:6px}
.ins .combo{margin-right:1px}
.list{height:37px;display:flex;border:1px solid #555;background:#fff;padding:1px;overflow:hidden}
.items{flex:1;overflow:hidden}
.items p{height:12px;padding-left:2px;line-height:13px;white-space:nowrap}
.hl{background:#3399ff;color:#fff}
.lsb{width:18px;background:#f0f0f0;display:flex;flex-direction:column;justify-content:space-between;align-items:center;padding:7px 0}
.f2{height:76px;display:flex;padding:6px 2px 0 7px;justify-content:space-between}
.lcol{width:188px}.lcol .row{justify-content:space-between;height:18px;margin-bottom:6px}
.lcol .row>span:first-child{white-space:nowrap}
.w98{width:98px}.w128{width:128px}
.group{width:125px;height:61px;background:#c3c3c3;border:1px solid #888;border-right-color:#eee;border-bottom-color:#eee;padding:4px 0 0 4px}
.group h4{margin-left:3px;margin-bottom:3px}
.rad{display:flex;align-items:center;height:18px;gap:1px}
.rad i{width:16px;height:16px;border:2px solid #777;border-radius:50%;background:linear-gradient(#ccc,#eee)}
.rad.on i{background:radial-gradient(circle,#15569f 0 2.5px,#8fd3f8 3.5px);border-color:#226099}
.rad.on span{border:1px dotted #333}
.rad span{padding:1px 0}
.f3{height:59px;padding:7px 2px 0 0}
.f3 .row{height:18px;margin-bottom:6px;white-space:nowrap}
.ty{width:41px;margin-left:-1px;color:#999;flex:none}
.w184{width:183px;flex:none}
.dis{background:#ccc;color:#888;border-color:#999 #ddd #ddd #999}
.dis em{background:#e0e0e0}.dis em::before{border-top-color:#aaa}
.un{margin:0 auto 0 4px}
.w50{width:49px}.w68c{width:67px}
.w50 em,.w68c em{width:16px}
.f4{height:236px;padding:7px 0 0 12px}
.pv{padding-left:18px;align-items:flex-start;height:39px}
.b30{width:30px;height:30px;margin-right:4px}
.p{display:flex;flex-direction:column;gap:6px;margin-top:1px;white-space:nowrap}
.p1{width:56px;margin-right:5px}.p2{width:65px;margin-right:5px}.p3{width:65px}
.p .inp{display:block;line-height:13px}
.p1 .inp,.p2 .inp{padding-left:13px}
.p3 .inp{text-align:right;padding-right:12px}
.plot text{font:11px "Liberation Mono"}
.vsb{width:15px;margin-left:2px;background:#f0f0f0;display:flex;flex-direction:column;align-items:center;padding:7px 0 6px}
.vsb i{width:15px;height:579px;margin-top:71px;border:1px solid #888;border-radius:2px;background:linear-gradient(90deg,#f4f4f4,#c6c9cf);padding:284px 3px 0}
.vsb b{display:block;height:8px;background:repeating-linear-gradient(#666 0 1px,transparent 1px 3px)}
.dn{margin-top:auto}
.dfoot{margin:3px 6px 0;padding:5px 10px 0;height:34px;border-top:1px solid #aaa;display:flex;justify-content:flex-end;gap:7px}
.db{width:64px;height:18px;border:2px solid #777;border-radius:4px;background:linear-gradient(#f8f8f8 45%,#cfd2d3 50%,#eee);text-align:center;line-height:14px}
.ok{background:linear-gradient(#d4f8c8 40%,#7fd465 50%,#a5f080);border-color:#2a7a2a #777 #777 #2a7a2a}
```
